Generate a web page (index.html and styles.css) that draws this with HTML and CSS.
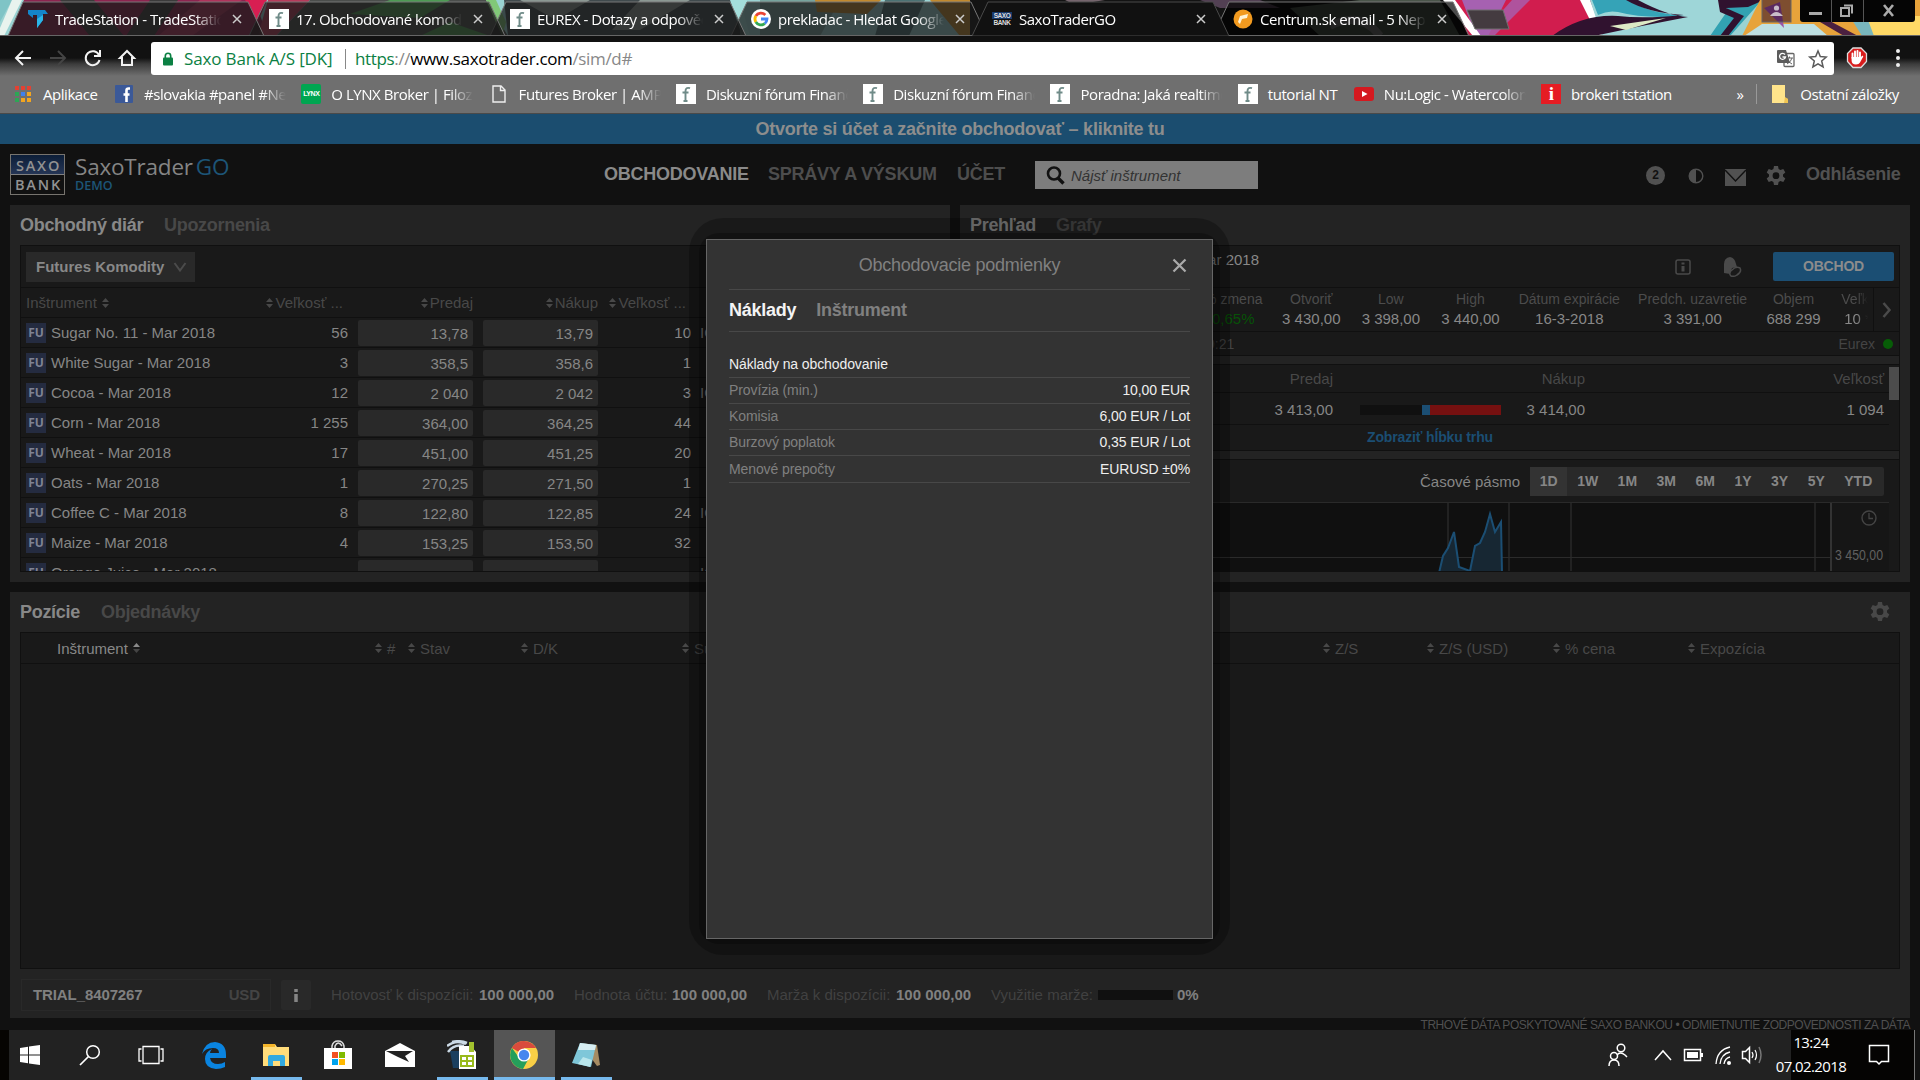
FILE: index.html
```html
<!DOCTYPE html>
<html lang="sk">
<head>
    <meta charset="UTF-8">
    <title>SaxoTraderGO</title>
    <link rel="stylesheet" href="styles.css">
</head>
<body>
    <svg class="symbols" width="0" height="0">
        <symbol id="sort" viewBox="0 0 7 10"><path d="M3.5 0L7 4H0zM3.5 10L0 6h7z" fill="currentColor"/></symbol>
        <symbol id="sort-up" viewBox="0 0 7 10"><path d="M3.5 0L7 4H0z" fill="#8a8a8a"/><path d="M3.5 10L0 6h7z" fill="#444"/></symbol>
        <symbol id="gear" viewBox="0 0 20 20"><path fill="currentColor" fill-rule="evenodd" d="M8 0h4l.6 3 1.8 1 2.9-1 2 3.400-2.300 2v2.200l2.300 2-2 3.400-2.900-1-1.800 1-.6 3H8l-.6-3-1.800-1-2.900 1-2-3.400 2.300-2V8.400l-2.300-2L2.700 3l2.900 1 1.800-1zM10 6.300a3.400 3.400 0 1 0 0 6.800 3.400 3.400 0 0 0 0-6.800z"/></symbol>
        <symbol id="close" viewBox="0 0 10 10"><path d="M1 1l8 8M9 1l-8 8" stroke="currentColor" stroke-width="1.500" fill="none"/></symbol>
        <symbol id="forum" viewBox="0 0 20 20"><rect width="20" height="20" fill="#fff"/><path d="M14 4.200c-3-1-4.500 0-4.500 3V17M6.500 8.500h6M7.500 17h4" stroke="#6f8b88" stroke-width="1.900" fill="none"/></symbol>
    </svg>

    <!-- browser tabs -->
    <div class="tab-strip">
        <svg class="strip-art" width="1920" height="36" viewBox="0 0 1920 36">
            <rect width="1920" height="36" fill="#9ad3d3"/>
            <path d="M0 0h12L0 22z" fill="#7fc4c6"/><path d="M12 0h10L4 36H0v-8z" fill="#e8f3ee"/>
            <path d="M24 0h230l14 36H8z" fill="#8e2450"/>
            <path d="M60 0h34l30 36H90zM150 0h28l-24 36h-28z" fill="#3b3b3b"/>
            <path d="M200 0h42l-50 36h-34z" fill="#b0335c"/>
            <path d="M245 0h22l-9 22z" fill="#d81e52"/>
            <path d="M268 0h42l-34 36h-18z" fill="#b83a5b"/>
            <path d="M310 0h176l22 36H276z" fill="#4b4e4c"/>
            <path d="M420 36l30-14 40 14zM350 14l40-14h60l-30 18z" fill="#4d9b54"/>
            <path d="M486 0h10l10 22-4 14z" fill="#81c878"/>
            <path d="M504 0h236v36H508z" fill="#404a4d"/>
            <path d="M520 0h70l-34 20zM640 0h50l-50 30h-28z" fill="#8b9893"/>
            <path d="M730 0h10l10 36h-8zM735 0h12l-4 20z" fill="#a4dedb"/>
            <path d="M760 0h80l-20 36h-60z" fill="#77a49e"/>
            <path d="M815 0h66l-14 14-50-2zM930 0h50v36h-20z" fill="#c28a2e"/>
            <path d="M885 0h40l-16 36h-34z" fill="#4b7274"/>
            <path d="M970 0h500v36H970z" fill="#131313"/>
            <path d="M1065 0h40l-30 5z" fill="#75656d"/>
            <path d="M1200 0h60l20 8h-60z" fill="#524053"/>
            <path d="M1290 8l70-8h80l20 36h-140z" fill="#4a554a"/>
            <path d="M1330 26q30-16 50 10" stroke="#777" stroke-width="8" fill="none"/>
            <path d="M1452 0h160l-20 36h-124z" fill="#d11d4e"/>
            <path d="M1462 0h44l-18 36h-12z" fill="#a661b1"/>
            <path d="M1443 0l30 36h8l-26-36z" fill="#fff"/>
            <path d="M1512 0h18l-36 36h-14z" fill="#a661b1" opacity=".8"/>
            <path d="M1580 0h10l14 36h-6z" fill="#fff"/>
            <path d="M1590 0h130v36h-118z" fill="#9ed6d8"/>
            <path d="M1592 0h38q14 12 54 16-40 3-66-4-10-2-20 3z" fill="#35a3b7"/>
            <path d="M1552 36q30-22 66-20 26 3 66-1-36-2-58-15h12q30 16 50 17-48 9-94 19z" fill="#30122f"/>
            <path d="M1610 26l56-8-40 12z" fill="#dce9c5"/>
            <path d="M1720 0h42l-32 36h-20l18-26z" fill="#32a2b2"/>
            <path d="M1718 0h46l-16 7-22 1 18 8-16 20h-8l14-18-14-6z" fill="#30122f"/>
            <path d="M1760 0h160v36h-178z" fill="#e7a33b"/>
            <path d="M1762 24h52l14 12h-84z" fill="#bfe0e2"/>
            <path d="M1764 8l20 20-4-26z" fill="#9a52a5"/>
            <path d="M1828 20l30 16h-14l-24-14z" fill="#4b2040"/>
            <path d="M1866 16h54v20h-50z" fill="#ffd966"/>
            <path d="M1852 20h16l6 16h-12z" fill="#79b7bd"/>
            <!-- tab outlines, drawn right to left so each right edge overlaps its neighbour -->
            <g fill="rgba(24,24,24,.74)" stroke="#777" stroke-width="1">
                <path d="M1213 36l16-34h224l16 34z" fill="rgba(0,0,0,.7)"/>
                <path d="M731 36l8-17 8-17h224l16 34z"/>
                <path d="M490 36l8-17 8-17h224l16 34z"/>
                <path d="M249 36l8-17 8-17h224l16 34z"/>
                <path d="M8 36l15-34h225l16 34z"/>
            </g>
            <path d="M972 36l16-34h225l16 34z" fill="#111" stroke="#4a4a4a"/>
            <path d="M0 35.500h972M1229 35.500h691" stroke="#666"/>
            <path d="M1467 10h36l6 19h-34z" fill="#443b40" stroke="#6f6f6f"/>
            <g fill="#050505">
                <rect x="1762" y="-1" width="29" height="23" fill="rgba(40,10,40,.55)" stroke="#666"/>
                <rect x="1800" y="-4" width="115" height="26" rx="3"/>
                <path d="M1831.500 0v22M1863.500 0v22" stroke="#555"/>
            </g>
            <g fill="none" stroke="#aaa" stroke-width="3">
                <path d="M1809 13.500h13"/>
                <path d="M1841 8h8v8h-8zM1844 5.500h8v8" stroke-width="2"/>
                <path d="M1884 5l9 11M1893 5l-9 11" stroke-width="2.600"/>
            </g>
            <circle cx="1776.500" cy="8" r="2.600" fill="#c8bcc8"/><path d="M1770 16q6-8 13 0z" fill="#c8bcc8"/>
        </svg>
        <div class="tabs">
            <div class="tab">
                <svg width="20" height="20" viewBox="0 0 20 20"><path d="M0 1h17l3 4h-5v6l-6 8V6H5v3L0 5z" fill="#1485c9"/><path d="M9 10l6-4v5l-6 8z" fill="#2ab6e8"/></svg>
                <span class="tab-text">TradeStation - TradeStation</span><svg class="tab-close"><use href="#close"/></svg>
            </div>
            <div class="tab">
                <svg width="20" height="20"><use href="#forum"/></svg>
                <span class="tab-text">17. Obchodované komodity</span><svg class="tab-close"><use href="#close"/></svg>
            </div>
            <div class="tab">
                <svg width="20" height="20"><use href="#forum"/></svg>
                <span class="tab-text">EUREX - Dotazy a odpovědi</span><svg class="tab-close"><use href="#close"/></svg>
            </div>
            <div class="tab">
                <svg width="20" height="20" viewBox="0 0 20 20"><circle cx="10" cy="10" r="10" fill="#fff"/><g fill="none" stroke-width="2.800"><path d="M14.300 6A6 6 0 0 0 4.800 7" stroke="#ea4335"/><path d="M4.800 7a6 6 0 0 0 0 6" stroke="#fbbc05"/><path d="M4.800 13a6 6 0 0 0 9 1.500" stroke="#34a853"/><path d="M13.800 14.500A6 6 0 0 0 16 10h-6" stroke="#4285f4"/></g></svg>
                <span class="tab-text">prekladac - Hledat Googlem</span><svg class="tab-close"><use href="#close"/></svg>
            </div>
            <div class="tab">
                <span class="saxo-mini"><b>SAXO</b><b>BANK</b></span>
                <span class="tab-text">SaxoTraderGO</span><svg class="tab-close"><use href="#close"/></svg>
            </div>
            <div class="tab">
                <svg width="20" height="20" viewBox="0 0 20 20"><circle cx="10" cy="10" r="9.500" fill="#f29a1f"/><path d="M5 13l2-6 8-2-1 4-5 1-2 5z" fill="#fff3d6"/></svg>
                <span class="tab-text">Centrum.sk email - 5 Nepř</span><svg class="tab-close"><use href="#close"/></svg>
            </div>
        </div>
    </div>

    <!-- address bar -->
    <div class="toolbar">
        <svg class="nav-icons" width="137" height="26" viewBox="0 0 137 26" fill="none" stroke="#f2f2f2" stroke-width="2">
            <path d="M17 13H2M9 6l-7 7 7 7"/>
            <path d="M36 13h15M44 6l7 7-7 7" stroke="#444"/>
            <path d="M85 10a7 7 0 1 0 .5 5M86 5v6h-6" />
            <path d="M106 13l7-7 7 7h-2v7h-10v-7z"/>
        </svg>
        <div class="address">
            <svg width="12" height="14" viewBox="0 0 12 14"><rect x="1" y="5.500" width="10" height="8" rx="1" fill="#0b8043"/><path d="M3.300 6V4a2.700 2.700 0 0 1 5.400 0v2" stroke="#0b8043" stroke-width="1.600" fill="none"/></svg>
            <span class="issuer">Saxo Bank A/S [DK]</span>
            <span class="url"><i>https</i>://<b>www.saxotrader.com</b>/sim/d#</span>
            <svg class="address-icons" width="52" height="20" viewBox="0 0 52 20">
                <rect x="8" y="4.500" width="10" height="13" rx="1" fill="#fff" stroke="#666" stroke-width="1.300"/>
                <path d="M10 9h7M13.500 7.500V9M16 9q-1 4-5 6M11.500 11q1 2 4.500 4" stroke="#666" fill="none"/>
                <path d="M2 1h8l4 13H2a1 1 0 0 1-1-1V2a1 1 0 0 1 1-1z" fill="#5c5c5c"/>
                <path d="M9 5.500A3 3 0 1 0 9.500 8H6.500" stroke="#fff" stroke-width="1.300" fill="none"/>
                <path d="M42 2l2.300 5.500 6 .5-4.600 4 1.400 6-5.100-3.200-5.100 3.200 1.400-6-4.600-4 6-.5z" fill="none" stroke="#5a5a5a" stroke-width="1.500"/>
            </svg>
        </div>
        <svg class="ext-icons" width="72" height="24" viewBox="0 0 72 24">
            <path d="M9 2h8l5.500 5.500v8L17 21.500H9L3.500 15.500v-8z" fill="#d91c1c" stroke="#ddd" stroke-width="1.300"/>
            <path d="M8.500 12V7.500M11 11V5.500M13.500 11V5M16 12V6.500" stroke="#fff" stroke-width="1.900" stroke-linecap="round"/><path d="M7.600 11h9.300l1.600-1.500.8 1-3.300 6q-1 2-4 2-4.400 0-4.400-4z" fill="#fff"/>
            <g fill="#eee"><circle cx="54" cy="5" r="2"/><circle cx="54" cy="12" r="2"/><circle cx="54" cy="19" r="2"/></g>
        </svg>
    </div>

    <div class="bookmarks">
        <div class="bookmark bookmark-apps">
            <svg width="20" height="20" viewBox="0 0 20 20"><g fill="#e34133"><path d="M2 2h4v4H2zM8 2h4v4H8zM14 2h4v4h-4z"/></g><path d="M2 8h4v4H2zM2 14h4v4H2z" fill="#2da655"/><path d="M8 8h4v4H8z" fill="#3e80ee"/><path d="M14 8h4v4h-4zM8 14h4v4H8zM14 14h4v4h-4z" fill="#f3a51f"/></svg>
            <span>Aplikace</span>
        </div>
        <div class="bookmark">
            <svg width="20" height="20" viewBox="0 0 20 20"><rect x="1" y="1" width="18" height="18" rx="1" fill="#3b5998"/><path d="M16 4.500h-1.500q-2 0-2 2V18M9.500 10.500h6" stroke="#fff" stroke-width="2.600" fill="none"/></svg>
            <span class="clip">#slovakia #panel #News</span>
        </div>
        <div class="bookmark"><span class="lynx">LYNX</span><span class="clip">O LYNX Broker | Filozofie</span></div>
        <div class="bookmark">
            <svg width="20" height="20" viewBox="0 0 20 20"><path d="M4 2h8l4 4v12H4zM11.500 2v4.500H16" fill="none" stroke="#eee" stroke-width="1.400"/></svg>
            <span class="clip">Futures Broker | AMP F</span>
        </div>
        <div class="bookmark"><svg width="20" height="20"><use href="#forum"/></svg><span class="clip">Diskuzní fórum Finančn</span></div>
        <div class="bookmark"><svg width="20" height="20"><use href="#forum"/></svg><span class="clip">Diskuzní fórum Finančn</span></div>
        <div class="bookmark"><svg width="20" height="20"><use href="#forum"/></svg><span class="clip">Poradna: Jaká realtime</span></div>
        <div class="bookmark bookmark-nt"><svg width="20" height="20"><use href="#forum"/></svg><span>tutorial NT</span></div>
        <div class="bookmark">
            <svg width="20" height="20" viewBox="0 0 20 20"><rect y="3" width="20" height="14" rx="3" fill="#d5191f"/><path d="M8 7l5.500 3L8 13z" fill="#fff"/></svg>
            <span class="clip">Nu:Logic - Watercolors</span>
        </div>
        <div class="bookmark"><span class="ibadge">i</span><span>brokeri tstation</span></div>
        <div class="bookmark-rest">
            <span>»</span><i></i>
            <svg width="18" height="20" viewBox="0 0 18 20"><path d="M1 1h13v13l3 1v4H1z" fill="#ffe48b"/><path d="M14 13l3 2v4h-4z" fill="#efc453"/></svg>
            <span>Ostatní záložky</span>
        </div>
    </div>

    <!-- trading platform -->
    <div class="app">
        <div class="banner">Otvorte si účet a začnite obchodovať – kliknite tu</div>
        <div class="header">
            <div class="saxo-logo"><b>SAXO</b><b>BANK</b></div>
            <div class="brand">
                <div class="brand-name">SaxoTrader<em>GO</em></div>
                <div class="brand-demo">DEMO</div>
            </div>
            <div class="menu"><span class="menu-1">OBCHODOVANIE</span><span class="menu-2">SPRÁVY A VÝSKUM</span><span class="menu-3">ÚČET</span></div>
            <div class="search">
                <svg width="19" height="19" viewBox="0 0 19 19"><circle cx="8" cy="7.500" r="6" fill="none" stroke="#111" stroke-width="2.600"/><path d="M12 12l5.500 5.500" stroke="#111" stroke-width="3.400"/></svg>
                <span>Nájsť inštrument</span>
            </div>
            <div class="header-right">
                <span class="count">2</span>
                <svg class="contrast" width="16" height="16" viewBox="0 0 16 16"><circle cx="8" cy="8" r="6.800" fill="none" stroke="#515151" stroke-width="1.400"/><path d="M8 1a7 7 0 0 0 0 14z" fill="#515151"/></svg>
                <svg class="mail" width="21" height="17" viewBox="0 0 21 17"><path d="M0 0h21v17H0z" fill="#515151"/><path d="M0 1l10.500 11L21 1" fill="none" stroke="#111" stroke-width="1.500"/></svg>
                <svg class="settings" width="20" height="20"><use href="#gear"/></svg>
                <span class="logout">Odhlásenie</span>
            </div>
        </div>

        <div class="columns">
            <div class="panel panel-left">
                <div class="panel-title"><span class="on t1">Obchodný diár</span><span>Upozornenia</span></div>
                <div class="box watch">
                    <div class="watch-top"><div class="dropdown">Futures Komodity <svg width="14" height="10" viewBox="0 0 14 10"><path d="M1.500 1L7 8.500 12.500 1" fill="none" stroke="#4b4b4b" stroke-width="2"/></svg></div></div>
                    <div class="watch-head">
                        <span class="c-name">Inštrument <svg class="sort"><use href="#sort"/></svg></span>
                        <span class="c-size head-size"><svg class="sort"><use href="#sort"/></svg>Veľkosť ...</span>
                        <span class="c-price"><svg class="sort"><use href="#sort"/></svg>Predaj</span>
                        <span class="c-price"><svg class="sort"><use href="#sort"/></svg>Nákup</span>
                        <span class="c-size2 head-size"><svg class="sort"><use href="#sort"/></svg>Veľkosť ...</span>
                    </div>
                    <div class="watch-row"><span class="c-name"><b>FU</b>Sugar No. 11 - Mar 2018</span><span class="c-size">56</span><span class="c-price">13,78</span><span class="c-price">13,79</span><span class="c-size2">10</span><span class="c-ex">ICE</span></div>
                    <div class="watch-row"><span class="c-name"><b>FU</b>White Sugar - Mar 2018</span><span class="c-size">3</span><span class="c-price">358,5</span><span class="c-price">358,6</span><span class="c-size2">1</span></div>
                    <div class="watch-row"><span class="c-name"><b>FU</b>Cocoa - Mar 2018</span><span class="c-size">12</span><span class="c-price">2 040</span><span class="c-price">2 042</span><span class="c-size2">3</span><span class="c-ex">ICE</span></div>
                    <div class="watch-row"><span class="c-name"><b>FU</b>Corn - Mar 2018</span><span class="c-size">1 255</span><span class="c-price">364,00</span><span class="c-price">364,25</span><span class="c-size2">44</span></div>
                    <div class="watch-row"><span class="c-name"><b>FU</b>Wheat - Mar 2018</span><span class="c-size">17</span><span class="c-price">451,00</span><span class="c-price">451,25</span><span class="c-size2">20</span></div>
                    <div class="watch-row"><span class="c-name"><b>FU</b>Oats - Mar 2018</span><span class="c-size">1</span><span class="c-price">270,25</span><span class="c-price">271,50</span><span class="c-size2">1</span></div>
                    <div class="watch-row"><span class="c-name"><b>FU</b>Coffee C - Mar 2018</span><span class="c-size">8</span><span class="c-price">122,80</span><span class="c-price">122,85</span><span class="c-size2">24</span><span class="c-ex">ICE</span></div>
                    <div class="watch-row"><span class="c-name"><b>FU</b>Maize - Mar 2018</span><span class="c-size">4</span><span class="c-price">153,25</span><span class="c-price">153,50</span><span class="c-size2">32</span></div>
                    <div class="watch-row"><span class="c-name"><b>FU</b>Orange Juice - Mar 2018</span><span class="c-size"></span><span class="c-price"></span><span class="c-price"></span><span class="c-size2"></span><span class="c-ex">ICE</span></div>
                </div>
            </div>

            <div class="panel panel-right">
                <div class="panel-title"><span class="on t2">Prehľad</span><span>Grafy</span></div>
                <div class="box overview">
                    <div class="quote-top">
                        <span class="quote-name">Mar 2018</span>
                        <svg class="info" width="16" height="16" viewBox="0 0 16 16"><rect x="1" y="1" width="14" height="14" rx="2" fill="none" stroke="#4a4a4a" stroke-width="1.500"/><path d="M8 3.500v2M8 7v5.500" stroke="#4a4a4a" stroke-width="3"/></svg>
                        <svg class="bell" width="20" height="20" viewBox="0 0 20 20"><path d="M2 16V7q0-6 6-7 5 1 6 7l1 3-5 1-2 6z" fill="#4a4a4a"/><path d="M9 19q-3-3 1-6 4-4 8-2 2 4-3 7-3 2-6 1z" fill="none" stroke="#4a4a4a" stroke-width="1.500"/></svg>
                        <span class="trade">OBCHOD</span>
                    </div>
                    <div class="stats">
                        <div class="s-change"><span>% zmena</span><b class="green">0,65%</b></div>
                        <div class="s-open"><span>Otvoriť</span><b>3 430,00</b></div>
                        <div class="s-open"><span>Low</span><b>3 398,00</b></div>
                        <div class="s-open"><span>High</span><b>3 440,00</b></div>
                        <div class="s-date"><span>Dátum expirácie</span><b>16-3-2018</b></div>
                        <div class="s-prev"><span>Predch. uzavretie</span><b>3 391,00</b></div>
                        <div class="s-vol"><span>Objem</span><b>688 299</b></div>
                        <div class="s-last"><span>Veľkosť</span><b>10 *</b></div>
                        <div class="s-more"><svg width="10" height="16" viewBox="0 0 10 16"><path d="M1.500 1l6 7-6 7" fill="none" stroke="#4a4a4a" stroke-width="2.500"/></svg></div>
                    </div>
                    <div class="exchange"><span>9:21</span><span class="eurex">Eurex<i></i></span></div>
                    <div class="scroll-body">
                        <div class="band"></div>
                        <div class="depth depth-head"><span class="d-sell">Predaj</span><span class="d-bar"></span><span class="d-buy">Nákup</span><span class="d-size">Veľkosť</span></div>
                        <div class="depth depth-row"><span class="d-sell">3 413,00</span><span class="d-bar"><i></i><u></u></span><span class="d-buy">3 414,00</span><span class="d-size">1 094</span></div>
                        <div class="depth-link">Zobraziť hĺbku trhu</div>
                        <div class="band"></div>
                        <div class="period">
                            <span class="period-label">Časové pásmo</span>
                            <div class="period-set"><span class="on">1D</span><span>1W</span><span>1M</span><span>3M</span><span>6M</span><span>1Y</span><span>3Y</span><span>5Y</span><span>YTD</span></div>
                        </div>
                        <svg class="chart" width="918" height="70" viewBox="971 501 918 70">
                            <path d="M971 501.500h918" stroke="#2a2a2a"/>
                            <g stroke="#222" stroke-width="2"><path d="M1448 502v69M1509 502v69M1571 502v69M1815 502v69"/><path d="M971 556.500h860" stroke-width="1" stroke="#2b2b2b"/><path d="M1831 502v69" stroke="#333"/></g>
                            <path d="M1832 502h57v69h-57z" fill="#161616"/>
                            <path d="M1439 572l4-17 5-8 6-16 5 35 11 4 5-25 5-3 5-11 5-18 5 18 6-10 1 51z" fill="#172733" stroke="#1b4e73" stroke-width="2"/>
                            <circle cx="1869" cy="517" r="7" fill="none" stroke="#444" stroke-width="1.400"/><path d="M1869 512v5.500h4" stroke="#444" fill="none" stroke-width="1.300"/>
                            <text x="1835" y="559" textLength="48" lengthAdjust="spacingAndGlyphs">3 450,00</text>
                        </svg>
                        <span class="thumb"></span>
                    </div>
                </div>
            </div>
        </div>

        <div class="panel positions">
            <div class="panel-title"><span class="on t3">Pozície</span><span>Objednávky</span><svg class="panel-gear" width="20" height="20"><use href="#gear"/></svg></div>
            <div class="box">
                <div class="pos-head">
                    <span class="p1">Inštrument <svg class="sort"><use href="#sort-up"/></svg></span>
                    <span class="p2"><svg class="sort"><use href="#sort"/></svg>#</span>
                    <span class="p3"><svg class="sort"><use href="#sort"/></svg>Stav</span>
                    <span class="p4"><svg class="sort"><use href="#sort"/></svg>D/K</span>
                    <span class="p5"><svg class="sort"><use href="#sort"/></svg>Suma</span>
                    <span class="p6"><svg class="sort"><use href="#sort"/></svg>Z/S</span>
                    <span class="p7"><svg class="sort"><use href="#sort"/></svg>Z/S (USD)</span>
                    <span class="p8"><svg class="sort"><use href="#sort"/></svg>% cena</span>
                    <span class="p9"><svg class="sort"><use href="#sort"/></svg>Expozícia</span>
                </div>
            </div>
            <div class="account">
                <div class="account-box"><b>TRIAL_8407267</b><b class="usd">USD</b></div>
                <div class="account-info"><svg width="4" height="14" viewBox="0 0 4 14"><path d="M2 1v3M2 6v8" stroke="#858585" stroke-width="3.500"/></svg></div>
                <span class="a1">Hotovosť k dispozícii:</span><b class="v">100 000,00</b>
                <span class="a2">Hodnota účtu:</span><b class="v">100 000,00</b>
                <span class="a3">Marža k dispozícii:</span><b class="v">100 000,00</b>
                <span class="a4">Využitie marže:</span><i class="usage"></i><b>0%</b>
            </div>
        </div>
        <div class="legal">TRHOVÉ DÁTA POSKYTOVANÉ SAXO BANKOU • ODMIETNUTIE ZODPOVEDNOSTI ZA DÁTA</div>
    </div>

    <!-- trading conditions dialog, with its stepped shadow -->
    <div class="dialog-shade"></div>
    <div class="dialog">
        <div class="dialog-title"><span>Obchodovacie podmienky</span><svg class="dialog-close"><use href="#close"/></svg></div>
        <div class="dialog-tabs"><span class="on">Náklady</span><span>Inštrument</span></div>
        <div class="dialog-section">Náklady na obchodovanie</div>
        <div class="cost"><span>Provízia (min.)</span><b>10,00 EUR</b></div>
        <div class="cost"><span>Komisia</span><b>6,00 EUR / Lot</b></div>
        <div class="cost"><span>Burzový poplatok</span><b>0,35 EUR / Lot</b></div>
        <div class="cost cost-last"><span>Menové prepočty</span><b>EURUSD ±0%</b></div>
    </div>

    <div class="taskbar">
        <div class="task t-start"><svg width="22" height="22" viewBox="0 0 22 22"><path d="M1 4l8-1.200V10.500H1zM10 2.600L21 1v9.500H10zM1 11.500h8v7.700L1 18zM10 11.500h11V21l-11-1.600z" fill="#fff"/></svg></div>
        <div class="task"><svg width="22" height="22" viewBox="0 0 22 22"><circle cx="14" cy="8" r="6.300" fill="none" stroke="#fff" stroke-width="1.500"/><path d="M9.500 12.500L1 21" stroke="#fff" stroke-width="1.700"/></svg></div>
        <div class="task t-view"><svg width="26" height="20" viewBox="0 0 26 20"><path d="M5 1.500h16v17H5zM3.500 4H1v12h2.500M22.500 4H25v12h-2.500" fill="none" stroke="#fff" stroke-width="1.300"/></svg></div>
        <div class="task"><svg width="26" height="28" viewBox="0 0 26 28"><path d="M1 13Q4 1 14 1q11 1 11 13v3H9q1 6 8 6 4 0 7-2v5q-4 2-9 2Q4 27 4 18q0-7 7-10-2 2-2 4h9q0-5-6-5-8 0-11 6z" fill="#0a84e0"/></svg></div>
        <div class="task running"><svg width="28" height="24" viewBox="0 0 28 24"><path d="M1 1h12l2 3h12v19H1z" fill="#ffdc7a"/><path d="M1 1h12v3H1z" fill="#f4b52b"/><path d="M6 23v-9q0-2 2-2h13q2 0 2 2v9h-5v-5h-7v5z" fill="#31a9e0"/></svg></div>
        <div class="task"><svg width="30" height="30" viewBox="0 0 30 30"><path d="M9 9V6q1-5 6-5t6 5v3M12 9V6q3-6 7 0" fill="none" stroke="#ddd" stroke-width="1.500"/><path d="M1 8h28v21H1z" fill="#fff"/><path d="M9 12h6v6H9z" fill="#f25022"/><path d="M16 12h6v6h-6z" fill="#7fba00"/><path d="M9 19h6v6H9z" fill="#00a4ef"/><path d="M16 19h6v6h-6z" fill="#ffb900"/></svg></div>
        <div class="task"><svg width="30" height="26" viewBox="0 0 30 26"><path d="M0 9l15-8 15 8v16H0z" fill="#fff"/><path d="M1 9h27l-8 5 4 6-11-5z" fill="#222"/></svg></div>
        <div class="task running"><svg width="30" height="30" viewBox="0 0 30 30"><path d="M3 11h13v17H6z" fill="#1b3f5f"/><path d="M1 12Q7 4 17 6M0 6q9-7 19-2M5 2q8-2 15 1" stroke="#cbd9e5" stroke-width="2.500" fill="none"/><path d="M12 6h12l5 6v17H12z" fill="#fff"/><path d="M22 2h5v10h-5z" fill="#a2c12e"/><path d="M14 16h12v10H14zM14 21h12M20 16v10" fill="none" stroke="#98b91b" stroke-width="2"/></svg></div>
        <div class="task running active"><svg width="28" height="28" viewBox="0 0 28 28"><circle cx="14" cy="14" r="14" fill="#f9cf46"/><path d="M14 14L2 7a14 14 0 0 1 24.200 0H14z" fill="#d94b3d"/><path d="M2 7a14 14 0 0 0 11 21l6-11-9 1z" fill="#259f5b"/><path d="M2 7a14 14 0 0 1 12-7v10z" fill="#d94b3d"/><circle cx="14" cy="14" r="6.600" fill="#fff"/><circle cx="14" cy="14" r="5.200" fill="#4787ee"/></svg></div>
        <div class="task running"><svg width="30" height="28" viewBox="0 0 30 28"><path d="M9 2l17 2 3 20-3 1z" fill="#a68b62"/><path d="M9 2l16 2-5 22L1 22z" fill="#7fc7d9"/><path d="M9 2l16 2-1 5L7 9z" fill="#d7eef2"/><path d="M12 16l9 3-2 7-12-3z" fill="#b9e6ec"/></svg></div>
        <div class="tray">
            <svg width="160" height="26" viewBox="0 0 160 26" fill="none" stroke="#fff" stroke-width="1.500">
                <circle cx="13" cy="6" r="3.800"/><path d="M9 13q3-4 8 0l2 2"/><circle cx="6" cy="14" r="3.500"/><path d="M1 24q0-6 5-6t5 6"/>
                <path d="M47 18l8-9 8 9"/>
                <path d="M76.500 7.500h16v11h-16z"/><path d="M79 10h11v6H79zM93 11h2v4h-2z" fill="#fff" stroke="none"/>
                <path d="M108 22Q109 8 122 5M112 22Q113 12 122 10M116 22q1-6 6-7" stroke-width="1.300"/><circle cx="121" cy="21" r="2" fill="#fff" stroke="none"/>
                <path d="M134.500 9.500h3l4-4v15l-4-4h-3z"/><path d="M144 10q2 3 0 6M147 8q3 5 0 10" stroke-width="1.200"/><path d="M151 5q4 8 0 16" stroke="#777"/>
            </svg>
        </div>
        <div class="clock"><span>13:24</span><span>07.02.2018</span></div>
        <div class="notify"><svg width="22" height="22" viewBox="0 0 22 22"><path d="M1.500 1.500h19v16h-7L11 20l-2.500-2.500h-7z" fill="none" stroke="#fff" stroke-width="1.500"/></svg></div>
    </div>
</body>
</html>
```
FILE: styles.css
```css
* {
    box-sizing: border-box;
}

body {
    margin: 0;
    width: 1920px;
    height: 1080px;
    overflow: hidden;
    position: relative;
    background: #111;
    color: #868686;
    font-family: "Liberation Sans", Arial, sans-serif;
    font-size: 15px;
    white-space: nowrap;
}

svg {
    display: block;
    flex: none;
}

.symbols {
    position: absolute;
}

/* browser */
.tab-strip {
    height: 36px;
    position: relative;
}

.strip-art {
    position: absolute;
    top: 0;
    left: 0;
}

.tabs {
    position: relative;
    display: flex;
    padding-left: 10px;
    height: 36px;
}

.tab {
    width: 241px;
    padding: 2px 0 0 18px;
    display: flex;
    align-items: center;
    gap: 7px;
    color: #fff;
    font: 15px "Open Sans", sans-serif;
    letter-spacing: -0.48px;
}

.tab-text,
.clip {
    overflow: hidden;
    -webkit-mask-image: linear-gradient(90deg, #000 84%, transparent);
    mask-image: linear-gradient(90deg, #000 84%, transparent);
}

.tab-text {
    width: 166px;
}

.tab-close {
    width: 10px;
    height: 10px;
    margin-left: 4px;
    color: #ccc;
}

.saxo-mini {
    width: 20px;
    height: 15px;
    background: linear-gradient(#183a6c 50%, #111 50%);
    color: #ddd;
    font: bold 6.5px/7.5px "Liberation Sans", sans-serif;
    display: flex;
    flex-direction: column;
    align-items: center;
}

.toolbar {
    height: 40px;
    display: flex;
    align-items: center;
    background: linear-gradient(#111 0, #111 22px, #3c3c3c 28px, #6f6f6f 40px);
}

.nav-icons {
    margin: 4px 0 0 14px;
    width: 137px;
}

.address {
    width: 1683px;
    height: 33px;
    margin-top: 5px;
    padding-left: 11px;
    background: #fff;
    border-radius: 3px;
    display: flex;
    align-items: center;
    color: #888;
    font: 17px "Open Sans", sans-serif;
}

.issuer {
    width: 162px;
    margin-left: 10px;
    margin-right: 9px;
    height: 20px;
    line-height: 19px;
    border-right: 1px solid #888;
    color: #0b8043;
    letter-spacing: -0.15px;
}

.url {
    flex: 1;
    letter-spacing: -0.35px;
}

.url i {
    font-style: normal;
    color: #0b8043;
}

.url b {
    font-weight: normal;
    color: #000;
}

.address-icons {
    margin-right: 6px;
}

.ext-icons {
    margin: 4px 0 0 10px;
}

.bookmarks {
    height: 38px;
    padding: 0 0 2px 13px;
    display: flex;
    align-items: center;
    background: #6f6f6f;
    border-bottom: 1px solid #4a4a4a;
    color: #fff;
    font: 15px "Open Sans", sans-serif;
    letter-spacing: -0.45px;
}

.bookmark {
    display: flex;
    align-items: center;
    gap: 10px;
    width: 187.3px;
    flex: none;
}

.bookmark-apps {
    width: 101px;
}

.bookmark-nt {
    width: 116px;
}

.clip {
    width: 142px;
}

.lynx,
.ibadge {
    width: 20px;
    height: 20px;
    border-radius: 2px;
    background: #00a651;
    font: bold 7px/20px "Liberation Sans", sans-serif;
    text-align: center;
}

.ibadge {
    background: #e51c23;
    border-radius: 0;
    font: bold 19px/20px "Liberation Serif", serif;
}

.bookmark-rest {
    display: flex;
    align-items: center;
    margin-left: 8px;
}

.bookmark-rest i {
    width: 1px;
    height: 20px;
    margin: 0 14px 0 13px;
    background: #999;
}

.bookmark-rest svg {
    margin-right: 11px;
}

/* platform */
.banner {
    height: 30px;
    line-height: 30px;
    background: #1b4d6f;
    text-align: center;
    font-size: 18px;
    font-weight: bold;
    letter-spacing: -0.23px;
    color: #8d8d8d;
}

.header {
    height: 61px;
    padding: 10px 0 0 10px;
    display: flex;
    align-items: flex-start;
}

.saxo-logo {
    width: 55px;
    height: 41px;
    border: 1px solid #77746e;
    background: linear-gradient(#0c1e38, #253555 19px, #808080 19px, #808080 20px, #111 20px);
    display: flex;
    flex-direction: column;
    align-items: center;
}

.saxo-logo b {
    height: 19px;
    font: 600 14.500px/21px "Open Sans", sans-serif;
    letter-spacing: 1.800px;
    color: #929292;
    margin-right: -2px;
}

.brand {
    width: 539px;
    padding-left: 10px;
    font-family: "Open Sans", sans-serif;
}

.brand-name {
    height: 24px;
    line-height: 25px;
    font-size: 22.500px;
    letter-spacing: -0.2px;
    color: #858585;
}

.brand-name em {
    font-style: normal;
    color: #1d5577;
    margin-left: 3px;
}

.brand-demo {
    font-size: 12.500px;
    font-weight: 600;
    line-height: 16px;
    color: #1d5577;
}

.menu {
    width: 431px;
    padding-top: 10px;
    display: flex;
    font-size: 18px;
    font-weight: bold;
    letter-spacing: -0.25px;
    color: #4d4d4d;
}

.menu-1 {
    width: 164px;
    color: #8a8a8a;
}

.menu-2 {
    width: 189px;
}

.search {
    width: 223px;
    height: 28px;
    margin-top: 7px;
    padding-left: 11px;
    display: flex;
    align-items: center;
    gap: 6px;
    background: #7d7d7d;
    color: #333;
    font-style: italic;
}

.header-right {
    display: flex;
    margin-left: 388px;
    color: #515151;
}

.count {
    width: 19px;
    height: 19px;
    margin-top: 12px;
    border-radius: 50%;
    background: #515151;
    color: #111;
    text-align: center;
    font: bold 12px/19px "Liberation Sans", sans-serif;
}

.contrast {
    margin: 14px 0 0 23px;
}

.mail {
    margin: 15px 0 0 21px;
}

.settings {
    margin: 12px 0 0 20px;
}

.logout {
    margin: 10px 0 0 20px;
    font-size: 18px;
    font-weight: bold;
    letter-spacing: -0.25px;
}

.columns {
    display: flex;
    gap: 10px;
    padding: 0 10px;
    height: 377px;
}

.panel {
    padding: 0 10px;
    background: #232323;
}

.panel-left {
    width: 940px;
}

.panel-right {
    width: 950px;
}

.panel-title {
    height: 40px;
    display: flex;
    align-items: center;
    font-size: 18px;
    font-weight: bold;
    letter-spacing: -0.3px;
    color: #484848;
}

.panel-title .on {
    color: #888;
}

.t1 {
    width: 144px;
}

.t2 {
    width: 86px;
}

.t3 {
    width: 81px;
}

.box {
    background: #191919;
    border: 1px solid #101010;
    overflow: hidden;
}

.watch,
.overview {
    height: 327px;
}

.watch-top {
    height: 41px;
    padding: 6px 0 0 5px;
}

.dropdown {
    width: 169px;
    height: 30px;
    padding: 0 8px 1px 10px;
    display: flex;
    align-items: center;
    justify-content: space-between;
    background: #292929;
    font-weight: bold;
    color: #888;
}

.sort {
    display: inline-block;
    width: 7px;
    height: 10px;
    margin-right: 2px;
}

.watch-head,
.watch-row {
    height: 30px;
    display: flex;
    align-items: center;
    border-top: 1px solid #101010;
    padding-left: 5px;
}

.watch-head {
    color: #484848;
}

.c-name {
    width: 212px;
    display: flex;
    align-items: center;
    gap: 5px;
}

.c-name b {
    width: 20px;
    height: 20px;
    background: #242b40;
    color: #7f8394;
    text-align: center;
    font: bold 12px/20px "Open Sans", sans-serif;
}

.c-size {
    width: 110px;
    text-align: right;
}

.head-size {
    padding-right: 5px;
}

.c-price {
    width: 115px;
    margin-left: 10px;
    text-align: right;
}

.watch-row .c-price {
    height: 26px;
    line-height: 28px;
    padding-right: 5px;
    border-radius: 2px;
    background: #292929;
}

.c-size2 {
    width: 93px;
    text-align: right;
}

.c-ex {
    margin-left: 9px;
}

.quote-top {
    height: 41px;
    padding-top: 6px;
    display: flex;
    line-height: 16px;
}

.quote-name {
    width: 288px;
    text-align: right;
    color: #888;
}

.info {
    margin: 7px 0 0 416px;
}

.bell {
    margin: 5px 0 0 31px;
}

.trade {
    margin-left: 31px;
    width: 121px;
    height: 29px;
    line-height: 29px;
    background: #1b4e73;
    border-radius: 2px;
    color: #8c8c8c;
    font-size: 14px;
    font-weight: bold;
    letter-spacing: -0.2px;
    text-align: center;
}

.stats {
    height: 44px;
    display: flex;
    border-top: 1px solid #101010;
    color: #4c4c4c;
    font-size: 14px;
}

.stats div {
    display: flex;
    flex-direction: column;
    align-items: center;
    padding-top: 3px;
    line-height: 17px;
}

.stats b {
    margin-top: 2px;
    font-size: 15px;
    font-weight: normal;
    color: #888;
}

.stats .green {
    color: #075207;
}

.s-change {
    margin-left: 224px;
    width: 77px;
}

.s-open {
    width: 80px;
}

.s-date {
    width: 119px;
}

.s-prev {
    width: 129px;
}

.s-vol {
    width: 74px;
}

.stats .s-last {
    margin-left: 11px;
    width: 27px;
    overflow: hidden;
    align-items: flex-start;
    -webkit-mask-image: linear-gradient(90deg, #000 60%, transparent);
    mask-image: linear-gradient(90deg, #000 60%, transparent);
}

.s-last b {
    padding-left: 3px;
}

.stats .s-more {
    width: 26px;
    margin-left: 5px;
    padding-top: 14px;
    border-left: 1px solid #101010;
}

.exchange {
    height: 24px;
    padding: 0 6px 0 236px;
    display: flex;
    justify-content: space-between;
    align-items: center;
    border-top: 1px solid #101010;
    color: #444;
    font-size: 14px;
}

.eurex {
    display: flex;
    align-items: center;
}

.eurex i {
    width: 10px;
    height: 10px;
    margin-left: 8px;
    border-radius: 50%;
    background: #075d07;
}

.scroll-body {
    position: relative;
}

.band {
    height: 10px;
    background: #232323;
    border: solid #101010;
    border-width: 1px 0;
}

.depth {
    display: flex;
    align-items: center;
    border-bottom: 1px solid #101010;
    margin-right: 10px;
}

.depth-head {
    height: 28px;
    color: #484848;
}

.depth-row {
    height: 32px;
    padding-top: 2px;
}

.d-sell {
    width: 362px;
    text-align: right;
}

.d-bar {
    display: flex;
    justify-content: flex-end;
    margin-left: 27px;
    width: 141px;
    height: 10px;
}

.depth-row .d-bar {
    background: #101010;
}

.d-bar i {
    width: 8px;
    background: #1b4e73;
}

.d-bar u {
    width: 71px;
    background: #751010;
}

.d-buy {
    width: 84px;
    text-align: right;
}

.d-size {
    width: 299px;
    text-align: right;
}

.depth-link {
    height: 25px;
    line-height: 25px;
    margin-left: 396px;
    color: #1b4e73;
    font-size: 14px;
    font-weight: bold;
    letter-spacing: -0.15px;
}

.period {
    height: 42px;
    display: flex;
    align-items: center;
    padding-left: 449px;
}

.period-label {
    width: 110px;
}

.period-set {
    display: flex;
    height: 29px;
    width: 354px;
    padding-right: 2px;
    background: #292929;
    border-radius: 2px;
    font-size: 14px;
    font-weight: bold;
    line-height: 29px;
}

.period-set span {
    flex: 1 1 auto;
    text-align: center;
}

.period-set .on {
    background: #333;
}

.chart {
    background: #101010;
}

.chart text {
    fill: #606060;
    font-size: 14px;
}

.thumb {
    position: absolute;
    top: 12px;
    right: 0;
    width: 10px;
    height: 33px;
    background: #4c4c4c;
}

/* positions */
.positions {
    margin: 10px 10px 0;
    height: 426px;
}

.positions .box {
    height: 337px;
}

.panel-gear {
    margin-left: auto;
    margin-right: 10px;
}

.pos-head {
    height: 31px;
    display: flex;
    align-items: center;
    padding-left: 36px;
    border-bottom: 1px solid #101010;
    color: #484848;
}

.pos-head span {
    display: flex;
    align-items: center;
    gap: 3px;
    flex: none;
}

.pos-head .p1 {
    width: 318px;
    color: #888;
    gap: 5px;
}

.p2 {
    width: 33px;
}

.p3 {
    width: 113px;
}

.p4 {
    width: 161px;
}

.p5 {
    width: 641px;
}

.p6 {
    width: 104px;
}

.p7 {
    width: 126px;
}

.p8 {
    width: 135px;
}

.account {
    height: 49px;
    padding-top: 2px;
    display: flex;
    align-items: center;
    color: #414141;
}

.account b {
    color: #808080;
}

.account-box {
    width: 250px;
    height: 32px;
    margin-left: 1px;
    padding: 0 10px 0 11px;
    border: 1px solid #292929;
    display: flex;
    align-items: center;
    justify-content: space-between;
    letter-spacing: -0.1px;
}

.account .usd {
    color: #444;
}

.account-info {
    width: 30px;
    height: 30px;
    margin: 0 20px 0 10px;
    background: #292929;
    border-radius: 2px;
    display: flex;
    align-items: center;
    justify-content: center;
}

.account .v {
    width: 95px;
}

.a1 {
    width: 148px;
}

.a2 {
    width: 98px;
}

.a3 {
    width: 129px;
}

.a4 {
    width: 107px;
}

.usage {
    width: 75px;
    height: 10px;
    margin-right: 4px;
    background: #101010;
}

.legal {
    height: 12px;
    padding-right: 10px;
    text-align: right;
    font-size: 12px;
    line-height: 14px;
    letter-spacing: -0.44px;
    color: #505050;
}

/* the dialog floats over the dimmed platform */
.dialog-shade {
    position: absolute;
    left: 689px;
    top: 218px;
    width: 541px;
    height: 737px;
    padding: 15px 10px 11px;
    border-radius: 34px;
    background: rgba(0, 0, 0, 0.27);
}

.dialog-shade::after {
    content: "";
    display: block;
    height: 100%;
    border-radius: 20px;
    background: rgba(0, 0, 0, 0.25);
}

.dialog {
    position: absolute;
    left: 706px;
    top: 239px;
    width: 507px;
    height: 700px;
    padding: 0 22px;
    background: #333;
    border: 1px solid #666;
    color: #808080;
    font-size: 14px;
    letter-spacing: -0.1px;
}

.dialog-title {
    height: 50px;
    display: flex;
    align-items: center;
    border-bottom: 1px solid #484848;
    font-size: 18px;
    letter-spacing: -0.25px;
}

.dialog-title span {
    flex: 1;
    text-align: center;
    padding: 2px 0 0 18px;
}

.dialog-close {
    width: 15px;
    height: 15px;
    margin: 2px 3px 0 0;
    color: #aaa;
}

.dialog-tabs {
    height: 42px;
    display: flex;
    align-items: center;
    gap: 20px;
    border-bottom: 1px solid #484848;
    font-size: 18px;
    font-weight: bold;
    letter-spacing: -0.25px;
}

.dialog-tabs .on {
    color: #f4f4f4;
}

.dialog-section {
    height: 46px;
    padding-top: 24px;
    color: #eee;
    border-bottom: 1px solid #484848;
}

.cost {
    height: 26px;
    padding-bottom: 2px;
    display: flex;
    align-items: center;
    justify-content: space-between;
    border-bottom: 1px solid #484848;
}

.cost-last {
    height: 27px;
    padding-bottom: 0;
}

.cost b {
    font-weight: normal;
    color: #eee;
}

/* windows taskbar */
.taskbar {
    position: absolute;
    left: 0;
    right: 0;
    bottom: 0;
    height: 50px;
    display: flex;
    background: linear-gradient(90deg, #060402 9px, #222 9px);
    color: #fff;
}

.task {
    width: 62px;
    display: flex;
    align-items: center;
    justify-content: center;
}

.t-start {
    width: 59px;
}

.t-view {
    padding-right: 3px;
}

.task.running {
    border-bottom: 3px solid #76b9ed;
    width: 51px;
    margin: 0 5px 0 6px;
    padding: 3px 2px 0 0;
}

.task.active {
    width: 61px;
    margin: 0 0 0 1px;
    background-color: #555;
}

.tray {
    margin-left: auto;
    width: 163px;
    display: flex;
    align-items: center;
}

.clock {
    width: 80px;
    display: flex;
    flex-direction: column;
    align-items: center;
    background: linear-gradient(90deg, #222 20px, #050403 20px);
    font: 15px/24px "Open Sans", sans-serif;
    letter-spacing: -0.6px;
}

.notify {
    width: 69px;
    padding-left: 17px;
    display: flex;
    align-items: center;
    background: linear-gradient(90deg, #050403 63px, #777 63px, #777 64px, #111 64px);
}
```
